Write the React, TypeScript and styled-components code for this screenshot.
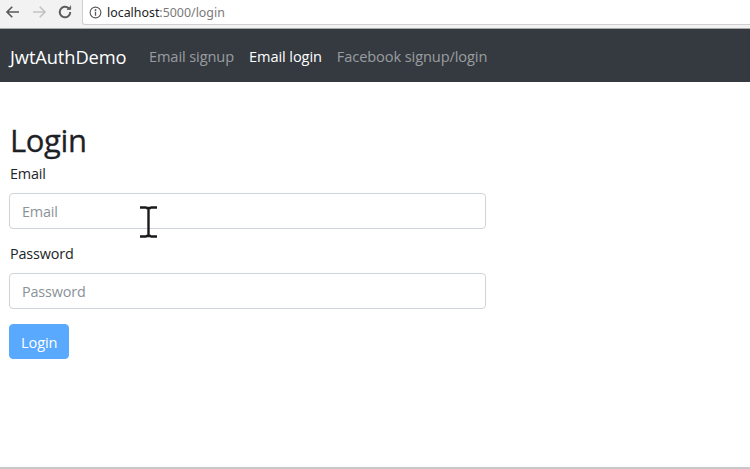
import styled, { createGlobalStyle } from 'styled-components'

const GlobalStyle = createGlobalStyle`
  html, body {
    margin: 0;
    padding: 0;
    background: #ffffff;
  }
  body {
    font-family: 'Open Sans', 'Noto Sans', sans-serif;
    color: #212529;
  }
  * { box-sizing: border-box; }
`

const Window = styled.div`
  width: 750px;
  height: 469px;
  display: flex;
  flex-direction: column;
  position: relative;
  overflow: hidden;
  border-bottom: 2px solid #c8c8c8;
`

const Toolbar = styled.div`
  height: 29px;
  display: flex;
  align-items: flex-start;
  background: #f2f2f2;
  border-bottom: 1px solid #a9a9a9;
`

const NavButtons = styled.div`
  display: flex;
  align-items: center;
  height: 24px;
  gap: 8px;
  padding-left: 4px;
  width: 82px;
`

const NavIcon = styled.svg<{ $dim?: boolean }>`
  width: 18px;
  height: 18px;
  color: ${({ $dim }) => ($dim ? '#c3c3c3' : '#5a5a5a')};
`

const AddressBar = styled.div`
  flex: 1;
  height: 25px;
  background: #ffffff;
  border: 1px solid #cfcfcf;
  border-top: none;
  border-right: none;
  border-bottom-left-radius: 3px;
  display: flex;
  align-items: center;
  padding-left: 6px;
  gap: 5px;
  font-family: 'Noto Sans', 'Open Sans', sans-serif;
  font-size: 12.4px;
`

const Host = styled.span`
  color: #222222;
`

const Path = styled.span`
  color: #7a7a7a;
`

const Navbar = styled.nav`
  height: 53px;
  background: #343a40;
  display: flex;
  align-items: center;
  padding: 1px 10px 0;
`

const Brand = styled.span`
  color: #ffffff;
  font-size: 18.3px;
  margin-right: 15px;
  letter-spacing: -0.1px;
`

const NavLink = styled.span<{ $active?: boolean }>`
  color: ${({ $active }) => ($active ? '#ffffff' : 'rgba(255,255,255,0.5)')};
  font-size: 14.6px;
  padding: 0 7.5px;
  letter-spacing: -0.1px;
`

const Container = styled.main`
  padding: 40px 10px 0;
  width: 496px;
`

const Title = styled.h2`
  margin: 0 0 5px;
  font-size: 31px;
  font-weight: 400;
  line-height: 1.2;
  color: #1d2125;
  letter-spacing: -0.4px;
  -webkit-text-stroke: 0.3px #1d2125;
`

const FormGroup = styled.div`
  margin-bottom: 15px;
  & + & {
    margin-top: 2px;
  }
`

const Label = styled.label`
  display: block;
  font-size: 14.4px;
  line-height: 20px;
  margin-bottom: 9px;
  color: #212529;
  letter-spacing: -0.15px;
`

const Input = styled.input`
  display: block;
  width: 477px;
  height: 36px;
  margin-left: -1px;
  padding: 0 12px;
  font-family: 'Open Sans', 'Noto Sans', sans-serif;
  font-size: 14.4px;
  border: 1px solid #ced4da;
  border-radius: 4px;
  color: #495057;
  outline: none;
  letter-spacing: -0.15px;
  &::placeholder {
    color: #8a9299;
  }
`

const SubmitButton = styled.button`
  height: 35px;
  margin-left: -1px;
  padding: 0 11px;
  background: #59a9ff;
  color: #ffffff;
  font-family: 'Open Sans', 'Noto Sans', sans-serif;
  font-size: 14.6px;
  border: 1px solid #59a9ff;
  border-radius: 4px;
  letter-spacing: -0.1px;
`

const TextCursor = styled.svg`
  position: absolute;
  left: 139px;
  top: 206px;
  width: 19px;
  height: 32px;
`

function BackIcon({ dim }: { dim?: boolean }) {
  return (
    <NavIcon $dim={dim} viewBox="0 0 24 24" fill="none" stroke="currentColor" strokeWidth="2.2">
      <path d="M20 12H5M11 5l-7 7 7 7" />
    </NavIcon>
  )
}

function ForwardIcon({ dim }: { dim?: boolean }) {
  return (
    <NavIcon $dim={dim} viewBox="0 0 24 24" fill="none" stroke="currentColor" strokeWidth="2.2">
      <path d="M4 12h15M13 5l7 7-7 7" />
    </NavIcon>
  )
}

function ReloadIcon() {
  return (
    <NavIcon viewBox="0 0 24 24" fill="none" stroke="currentColor" strokeWidth="2.6">
      <path d="M19 12a7 7 0 1 1-2.1-5" />
      <path d="M19.5 3.5v5h-5" fill="currentColor" strokeWidth="1" />
    </NavIcon>
  )
}

function InfoIcon() {
  return (
    <svg width="13" height="13" viewBox="0 0 16 16" fill="none" stroke="#5a5a5a" strokeWidth="1.4">
      <circle cx="8" cy="8" r="6.6" />
      <path d="M8 7v5" strokeWidth="1.6" />
      <circle cx="8" cy="4.8" r="0.5" fill="#5a5a5a" />
    </svg>
  )
}

export default function App() {
  return (
    <Window>
      <GlobalStyle />
      <Toolbar>
        <NavButtons>
          <BackIcon />
          <ForwardIcon dim />
          <ReloadIcon />
        </NavButtons>
        <AddressBar>
          <InfoIcon />
          <span>
            <Host>localhost</Host>
            <Path>:5000/login</Path>
          </span>
        </AddressBar>
      </Toolbar>
      <Navbar>
        <Brand>JwtAuthDemo</Brand>
        <NavLink>Email signup</NavLink>
        <NavLink $active>Email login</NavLink>
        <NavLink>Facebook signup/login</NavLink>
      </Navbar>
      <Container>
        <Title>Login</Title>
        <FormGroup>
          <Label>Email</Label>
          <Input type="email" placeholder="Email" />
        </FormGroup>
        <FormGroup>
          <Label>Password</Label>
          <Input type="password" placeholder="Password" />
        </FormGroup>
        <SubmitButton disabled>Login</SubmitButton>
      </Container>
      <TextCursor viewBox="0 0 19 32">
        <path d="M1 1.5h6.5M11.5 1.5H18M9.5 2.5v27M1 30.5h6.5M11.5 30.5H18M7 2h5M7 30h5" stroke="#1a1a1a" strokeWidth="2.4" fill="none" />
      </TextCursor>
    </Window>
  )
}
